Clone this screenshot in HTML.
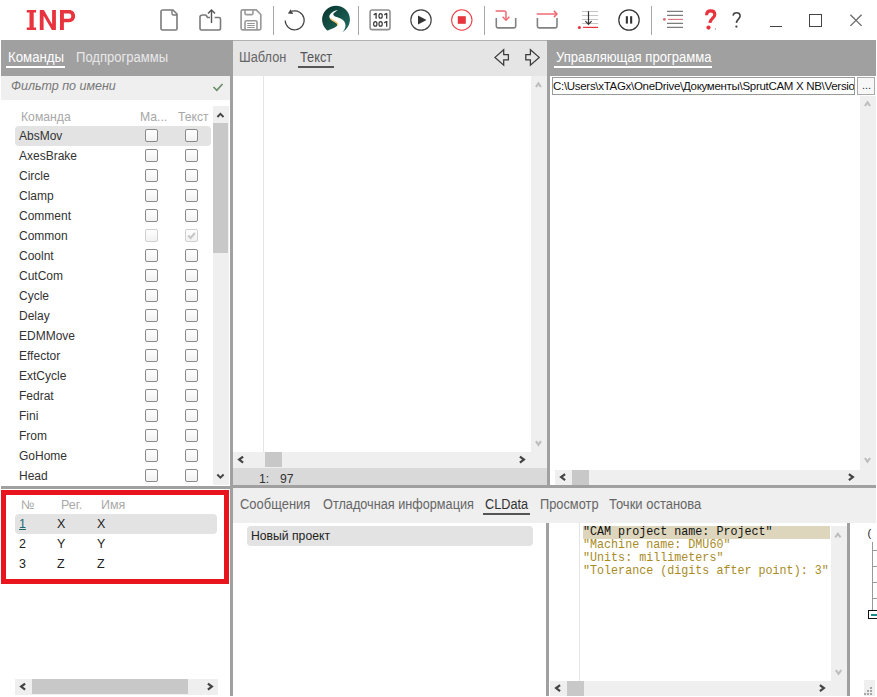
<!DOCTYPE html>
<html><head><meta charset="utf-8">
<style>
*{box-sizing:border-box;margin:0;padding:0}
html,body{width:877px;height:697px;overflow:hidden;background:#fff;font-family:"Liberation Sans",sans-serif;position:relative}
.a{position:absolute}
.t{position:absolute;white-space:nowrap;font-size:13px;line-height:13px}
.tab{font-size:14px;line-height:14px;transform:scaleX(0.913);transform-origin:0 0}
.sep{position:absolute;top:6px;width:1px;height:29px;background:#a8a8a8}
.cb{position:absolute;width:13px;height:13px;border:1px solid #8a8a8a;border-radius:2px;background:linear-gradient(#fff,#f1f1f1)}
.row{position:absolute;left:19px;font-size:12px;color:#333;white-space:nowrap;line-height:13px}
</style></head><body>
<!-- title bar -->
<svg class="a" style="left:0;top:0" width="80" height="40"><path fill="#e8343e" fill-rule="evenodd" d="M26.8,10 H36.1 V12.4 H33.7 V27.6 H36.1 V30 H26.8 V27.6 H29.5 V12.4 H26.8Z M39.8,10 H43.9 L52.1,24.3 V10 H55.9 V30 H51.9 L43.6,15.7 V30 H39.8Z M60,10 H69 C72.8,10 75.1,12.5 75.1,16.1 C75.1,19.7 72.8,22.2 69,22.2 H63.9 V30 H60Z M63.9,13.4 H68.9 C70.6,13.4 71.3,14.6 71.3,16.1 C71.3,17.6 70.6,18.8 68.9,18.8 H63.9Z"/></svg>
<svg class="a" style="left:0;top:0" width="877" height="40" viewBox="0 0 877 40">
 <!-- new doc -->
 <path d="M162,10 H173 L177,14 V28.5 Q177,30 175.5,30 H162.5 Q161,30 161,28.5 V11.5 Q161,10 162.5,10Z" fill="none" stroke="#7a7a7a" stroke-width="1.6"/>
 <path d="M172,10 V13.5 Q172,15 173.5,15 H177" fill="none" stroke="#7a7a7a" stroke-width="1.4"/>
 <!-- share -->
 <path d="M206,15 H203 Q200,15 200,17 V28.5 Q200,30 201.5,30 H219 Q220.5,30 220.5,28.5 V19 Q220.5,17.5 219,17.5 H214.6" fill="none" stroke="#7a7a7a" stroke-width="1.6"/>
 <path d="M206,15 L207.5,17.5 H210" fill="none" stroke="#7a7a7a" stroke-width="1.6"/>
 <path d="M211.5,23 V10.5 M208,13.5 L211.5,10 L215,13.5" fill="none" stroke="#555" stroke-width="1.4"/>
 <!-- save -->
 <path d="M242.6,9.9 H256.2 L260.8,14.5 V28.3 Q260.8,29.8 259.3,29.8 H242.6 Q241.1,29.8 241.1,28.3 V11.4 Q241.1,9.9 242.6,9.9Z" fill="none" stroke="#9a9a9a" stroke-width="1.7"/>
 <path d="M245,10 V13.2 Q245,14.6 246.4,14.6 H251.6 Q253,14.6 253,13.2 V10" fill="none" stroke="#9a9a9a" stroke-width="1.6"/>
 <path d="M245,29.8 V22.3 Q245,20.8 246.5,20.8 H255.5 Q257,20.8 257,22.3 V29.8" fill="none" stroke="#9a9a9a" stroke-width="1.6"/>
 <path d="M247.2,23.5 H254.8 M247.2,25.5 H254.8 M247.2,27.5 H254.8" stroke="#8a8a8a" stroke-width="0.9"/>
 <!-- undo -->
 <path d="M292,11.2 A9.5,9.5 0 1 1 285.2,20.5" fill="none" stroke="#444" stroke-width="1.2"/>
 <path d="M287.9,13.6 L290.7,9.3 L293.2,13.9Z" fill="#444"/>
 <!-- logo -->
 <defs><linearGradient id="lg" x1="0" y1="0" x2="1" y2="1"><stop offset="0" stop-color="#05332b"/><stop offset="1" stop-color="#236e62"/></linearGradient></defs>
 <circle cx="336" cy="19.6" r="13.9" fill="url(#lg)"/>
 <path d="M337.8,9.9 C335,10.3 331.5,12 329.8,14.8 C328.9,16.5 329.3,18.3 331,19.8 C332.8,21.3 335.5,22 337,23.3 C337.8,24.3 337.5,25.6 336.3,26.5 C334,28.2 330,29.6 327.3,30.8 L326,40 L341,40 L341.2,33.3 C343.5,31.2 345.3,29 345.5,25.5 C345.6,22.5 343.5,20 340.5,18.6 C338,17.5 335,16.8 333.8,15.5 C333,14.6 333.2,13.6 334,13 C335,11.8 336.5,10.7 337.8,9.9Z" fill="#fff"/>
 <path d="M330.4,18.4 C332,20.3 334.8,21.4 336.5,22.6 C337.6,23.4 337.9,24.4 337.6,25.4" fill="none" stroke="#f2c86a" stroke-width="1.3"/>
 <!-- 101 -->
 <rect x="370.1" y="9.9" width="19.9" height="19.7" rx="2.2" fill="none" stroke="#8e8e8e" stroke-width="1.55"/>
 <path d="M376.10,13.00 V18.80 M373.70,14.90 L376.10,13.30 M386.70,13.00 V18.80 M384.30,14.90 L386.70,13.30 M386.70,21.00 V26.80 M384.30,22.90 L386.70,21.30" fill="none" stroke="#3a3a3a" stroke-width="1.3"/>
 <ellipse cx="380.60" cy="15.90" rx="1.65" ry="2.25" fill="none" stroke="#3a3a3a" stroke-width="1.2"/>
 <ellipse cx="375.30" cy="23.90" rx="1.65" ry="2.25" fill="none" stroke="#3a3a3a" stroke-width="1.2"/>
 <ellipse cx="380.60" cy="23.90" rx="1.65" ry="2.25" fill="none" stroke="#3a3a3a" stroke-width="1.2"/>
 <!-- play -->
 <circle cx="421" cy="20" r="10.2" fill="none" stroke="#444" stroke-width="1.2"/>
 <path d="M418,15.5 L426.5,20 L418,24.5Z" fill="#333"/>
 <!-- stop -->
 <circle cx="461.8" cy="20" r="10.2" fill="none" stroke="#ec3c46" stroke-width="1.05"/>
 <rect x="457.8" y="16.2" width="8" height="7.6" fill="#e8343c"/>
 <!-- import -->
 <path d="M496.3,18 V26.3 Q496.3,27.9 497.9,27.9 H514.1 Q515.7,27.9 515.7,26.3 V18" fill="none" stroke="#828282" stroke-width="1.6"/>
 <path d="M495.6,11 H504.2 Q506,11 506,12.8 V20" fill="none" stroke="#f06a74" stroke-width="1.5"/>
 <path d="M502.6,16.8 L506,20.2 L509.4,16.8" fill="none" stroke="#f06a74" stroke-width="1.5"/>
 <!-- export -->
 <path d="M537.4,18 V26.3 Q537.4,27.9 539,27.9 H555.4 Q557,27.9 557,26.3 V18" fill="none" stroke="#828282" stroke-width="1.6"/>
 <path d="M536.7,14 H556.8" fill="none" stroke="#f06a74" stroke-width="1.5"/>
 <path d="M553.9,10.9 L557,14 L553.9,17.1" fill="none" stroke="#f06a74" stroke-width="1.5"/>
 <!-- list arrow -->
 <path d="M582,11.5 H598 M582,15.5 H598 M582,19.5 H598 M582,23.5 H598" stroke="#bdbdbd" stroke-width="0.9"/>
 <path d="M583,27.4 H598" stroke="#e8343c" stroke-width="1.2"/>
 <circle cx="579.4" cy="27.4" r="1.5" fill="#e8343c"/>
 <path d="M588.5,11.2 V24.2 M585.4,21.2 L588.5,24.3 L591.6,21.2" fill="none" stroke="#333" stroke-width="1.2"/>
 <!-- pause -->
 <circle cx="629" cy="20" r="10.2" fill="none" stroke="#333" stroke-width="1.2"/>
 <rect x="625.8" y="16.2" width="2.1" height="7.4" fill="#333"/>
 <rect x="630.1" y="16.2" width="2.1" height="7.4" fill="#333"/>
 <!-- list -->
 <path d="M667,11.4 H683 M667,15.4 H683 M667,23.4 H683 M667,27.4 H683" stroke="#7c7c7c" stroke-width="1.1"/>
 <path d="M668,19.4 H683" stroke="#d8707a" stroke-width="1.1"/>
 <circle cx="664.4" cy="19.4" r="1.45" fill="#d8707a"/>
 <!-- min max close -->
 <path d="M770,26.5 H782" stroke="#444" stroke-width="1"/>
 <rect x="809.5" y="14.5" width="12" height="12" fill="none" stroke="#444" stroke-width="1"/>
 <path d="M850.4,14.7 L861.6,25.9 M861.6,14.7 L850.4,25.9" stroke="#6a6a6a" stroke-width="1.3"/>
</svg>
<div class="sep" style="left:273px"></div>
<div class="sep" style="left:358px"></div>
<div class="sep" style="left:484px"></div>
<div class="sep" style="left:651px"></div>
<svg class="a" style="left:0;top:0" width="877" height="40" viewBox="0 0 877 40">
 <path d="M706.6,15.2 C706.6,12.2 708.6,10.9 710.7,10.9 C713.2,10.9 714.8,12.4 714.8,14.7 C714.8,17.8 710.2,18.6 709.9,22.9" fill="none" stroke="#e8323c" stroke-width="3.1"/>
 <circle cx="708.5" cy="27.6" r="2.1" fill="#e8323c"/>
 <rect x="715" y="28.3" width="1" height="1.4" fill="#999"/>
 <path d="M733.1,15.6 C733.4,13.6 734.8,12.8 736.5,12.8 C738.6,12.8 740.1,14.1 740.1,16.1 C740.1,18.7 736.6,19.6 736.4,22.9" fill="none" stroke="#444" stroke-width="1.6"/>
 <circle cx="736.4" cy="26.6" r="1.15" fill="#444"/>
</svg>
<!-- ===== LEFT TOP PANEL ===== -->
<div class="a" style="left:1px;top:40px;width:229px;height:36px;background:#a0a0a0"></div>
<div class="t tab" style="left:7.5px;top:50px;color:#fff;transform:scaleX(0.945)">Команды</div>
<div class="a" style="left:6px;top:66px;width:59px;height:2px;background:#fff"></div>
<div class="t tab" style="left:75.5px;top:50px;color:#e8e8e8;transform:scaleX(0.932)">Подпрограммы</div>
<div class="a" style="left:1px;top:76px;width:229px;height:24px;background:#efefef"></div>
<div class="t" style="left:11px;top:80px;color:#777;font-style:italic;font-size:12.5px">Фильтр по имени</div>
<svg class="a" style="left:210px;top:80px" width="14" height="14"><path d="M3.5,7 L6.8,10.3 L12.5,4" fill="none" stroke="#6a8a6a" stroke-width="1.6"/></svg>
<div class="t" style="left:21px;top:111px;color:#a8a8a8;font-size:12.2px">Команда</div>
<div class="t" style="left:140px;top:111px;color:#a8a8a8;font-size:12.2px">Ма...</div>
<div class="t" style="left:178px;top:111px;color:#a8a8a8;font-size:12.2px">Текст</div>
<!-- scrollbar -->
<div class="a" style="left:213px;top:106px;width:16px;height:379px;background:#efefef"></div>
<div class="a" style="left:213px;top:123px;width:15px;height:130px;background:#c8c8c8"></div>
<svg class="a" style="left:213px;top:106px" width="16" height="17"><path d="M4.4,11 L7.45,7.9 L10.5,11" fill="none" stroke="#444" stroke-width="1.9"/></svg>
<svg class="a" style="left:213px;top:468px" width="16" height="17"><path d="M4.3,6.5 L7.45,9.7 L10.6,6.5" fill="none" stroke="#444" stroke-width="1.9"/></svg>
<div class="a" style="left:15px;top:126px;width:196px;height:20px;background:#e3e3e3;border-radius:4px"></div>
<div class="row" style="top:130px">AbsMov</div>
<div class="cb" style="left:145px;top:129px"></div>
<div class="cb" style="left:185px;top:129px"></div>
<div class="row" style="top:150px">AxesBrake</div>
<div class="cb" style="left:145px;top:149px"></div>
<div class="cb" style="left:185px;top:149px"></div>
<div class="row" style="top:170px">Circle</div>
<div class="cb" style="left:145px;top:169px"></div>
<div class="cb" style="left:185px;top:169px"></div>
<div class="row" style="top:190px">Clamp</div>
<div class="cb" style="left:145px;top:189px"></div>
<div class="cb" style="left:185px;top:189px"></div>
<div class="row" style="top:210px">Comment</div>
<div class="cb" style="left:145px;top:209px"></div>
<div class="cb" style="left:185px;top:209px"></div>
<div class="row" style="top:230px">Common</div>
<div class="cb" style="left:145px;top:229px;border-color:#d0d0d0"></div>
<div class="cb" style="left:185px;top:229px;border-color:#d0d0d0"><svg width="11" height="11" style="position:absolute;left:0;top:0"><path d="M2.2,5.5 L4.6,8 L9,3" fill="none" stroke="#c6c6c6" stroke-width="2.1"/></svg></div>
<div class="row" style="top:250px">Coolnt</div>
<div class="cb" style="left:145px;top:249px"></div>
<div class="cb" style="left:185px;top:249px"></div>
<div class="row" style="top:270px">CutCom</div>
<div class="cb" style="left:145px;top:269px"></div>
<div class="cb" style="left:185px;top:269px"></div>
<div class="row" style="top:290px">Cycle</div>
<div class="cb" style="left:145px;top:289px"></div>
<div class="cb" style="left:185px;top:289px"></div>
<div class="row" style="top:310px">Delay</div>
<div class="cb" style="left:145px;top:309px"></div>
<div class="cb" style="left:185px;top:309px"></div>
<div class="row" style="top:330px">EDMMove</div>
<div class="cb" style="left:145px;top:329px"></div>
<div class="cb" style="left:185px;top:329px"></div>
<div class="row" style="top:350px">Effector</div>
<div class="cb" style="left:145px;top:349px"></div>
<div class="cb" style="left:185px;top:349px"></div>
<div class="row" style="top:370px">ExtCycle</div>
<div class="cb" style="left:145px;top:369px"></div>
<div class="cb" style="left:185px;top:369px"></div>
<div class="row" style="top:390px">Fedrat</div>
<div class="cb" style="left:145px;top:389px"></div>
<div class="cb" style="left:185px;top:389px"></div>
<div class="row" style="top:410px">Fini</div>
<div class="cb" style="left:145px;top:409px"></div>
<div class="cb" style="left:185px;top:409px"></div>
<div class="row" style="top:430px">From</div>
<div class="cb" style="left:145px;top:429px"></div>
<div class="cb" style="left:185px;top:429px"></div>
<div class="row" style="top:450px">GoHome</div>
<div class="cb" style="left:145px;top:449px"></div>
<div class="cb" style="left:185px;top:449px"></div>
<div class="row" style="top:470px">Head</div>
<div class="cb" style="left:145px;top:469px"></div>
<div class="cb" style="left:185px;top:469px"></div>
<!-- divider left -->
<div class="a" style="left:230px;top:40px;width:3px;height:656px;background:#a0a0a0"></div>
<div class="a" style="left:1px;top:486px;width:229px;height:3px;background:#a0a0a0"></div>

<!-- ===== LEFT BOTTOM ===== -->
<div class="a" style="left:1px;top:490px;width:228px;height:94px;border:5px solid #e8141e"></div>
<div class="t" style="left:21px;top:499px;color:#a8a8a8;font-size:12.5px">№</div>
<div class="t" style="left:61px;top:499px;color:#a8a8a8;font-size:12.5px">Рег.</div>
<div class="t" style="left:101px;top:499px;color:#a8a8a8;font-size:12.5px">Имя</div>
<div class="a" style="left:15px;top:514px;width:202px;height:20px;background:#e3e3e3;border-radius:4px"></div>
<div class="t" style="left:19px;top:518px;color:#1a6a70;font-size:12.5px;text-decoration:underline">1</div>
<div class="t" style="left:57px;top:518px;color:#222;font-size:12.5px">X</div>
<div class="t" style="left:97px;top:518px;color:#222;font-size:12.5px">X</div>
<div class="t" style="left:19px;top:538px;color:#222;font-size:12.5px">2</div>
<div class="t" style="left:57px;top:538px;color:#222;font-size:12.5px">Y</div>
<div class="t" style="left:97px;top:538px;color:#222;font-size:12.5px">Y</div>
<div class="t" style="left:19px;top:558px;color:#222;font-size:12.5px">3</div>
<div class="t" style="left:57px;top:558px;color:#222;font-size:12.5px">Z</div>
<div class="t" style="left:97px;top:558px;color:#222;font-size:12.5px">Z</div>
<div class="a" style="left:15px;top:679px;width:203px;height:16px;background:#efefef"></div>
<div class="a" style="left:32px;top:679px;width:156px;height:15px;background:#c8c8c8"></div>
<svg class="a" style="left:15px;top:679px" width="16" height="16"><path d="M10.1,4.6 L6.1,7.6 L10.1,10.6" fill="none" stroke="#444" stroke-width="2.2"/></svg>
<svg class="a" style="left:202px;top:679px" width="16" height="16"><path d="M5.9,4.6 L9.9,7.6 L5.9,10.6" fill="none" stroke="#444" stroke-width="2.2"/></svg>

<!-- ===== MIDDLE TOP ===== -->
<div class="a" style="left:233px;top:40px;width:314px;height:36px;background:#e5e5e5;border-top:1px solid #b0b0b0"></div>
<div class="t tab" style="left:239px;top:50px;color:#666;transform:scaleX(0.913)">Шаблон</div>
<div class="t tab" style="left:300px;top:50px;color:#555;transform:scaleX(0.913)">Текст</div>
<div class="a" style="left:298px;top:66px;width:36px;height:2px;background:#555"></div>
<svg class="a" style="left:490px;top:46px" width="54" height="24">
 <path d="M5,11.4 L13.7,3.7 V8.7 H18.4 V13.9 H13.7 V19.1Z" fill="none" stroke="#3a3a3a" stroke-width="1.25" stroke-linejoin="miter"/>
 <path d="M49.2,11.4 L40.4,3.7 V8.7 H35.8 V13.9 H40.4 V19.1Z" fill="none" stroke="#3a3a3a" stroke-width="1.25" stroke-linejoin="miter"/>
</svg>
<div class="a" style="left:263px;top:76px;width:1px;height:376px;background:#e4e4e4"></div>
<div class="a" style="left:531px;top:76px;width:16px;height:392px;background:#efefef"></div>
<svg class="a" style="left:531px;top:76px" width="16" height="18"><path d="M5,11 L7.45,7.4 L9.9,11" fill="none" stroke="#bdbdbd" stroke-width="2.1"/></svg>
<svg class="a" style="left:531px;top:435px" width="16" height="16"><path d="M5,6.2 L7.45,9.8 L9.9,6.2" fill="none" stroke="#bdbdbd" stroke-width="2.1"/></svg>
<div class="a" style="left:233px;top:452px;width:314px;height:16px;background:#efefef"></div>
<div class="a" style="left:265px;top:452px;width:17px;height:15px;background:#c8c8c8"></div>
<svg class="a" style="left:233px;top:452px" width="16" height="16"><path d="M10.1,4.6 L6.1,7.6 L10.1,10.6" fill="none" stroke="#444" stroke-width="2.2"/></svg>
<svg class="a" style="left:514px;top:452px" width="16" height="16"><path d="M5.9,4.6 L9.9,7.6 L5.9,10.6" fill="none" stroke="#444" stroke-width="2.2"/></svg>
<div class="a" style="left:233px;top:468px;width:314px;height:17px;background:#d9d9d9"></div>
<div class="t" style="left:259px;top:473px;color:#333;font-size:12.2px">1:</div>
<div class="t" style="left:280px;top:473px;color:#333;font-size:12.2px">97</div>
<div class="a" style="left:547px;top:40px;width:3px;height:446px;background:#a0a0a0"></div>
<div class="a" style="left:233px;top:485px;width:643px;height:3px;background:#a0a0a0"></div>

<!-- ===== RIGHT TOP ===== -->
<div class="a" style="left:550px;top:40px;width:326px;height:36px;background:#a0a0a0"></div>
<div class="t tab" style="left:556px;top:50px;color:#fff;transform:scaleX(0.935)">Управляющая программа</div>
<div class="a" style="left:554px;top:66px;width:158px;height:2px;background:#fff"></div>
<div class="a" style="left:552px;top:77px;width:303px;height:18px;border:1px solid #9a9a9a;background:#fff;overflow:hidden">
 <div class="t" style="left:0px;top:1.5px;font-size:11.5px;line-height:12px;color:#111;letter-spacing:-0.3px">C:\Users\xTAGx\OneDrive\Документы\SprutCAM X NB\Version</div>
</div>
<div class="a" style="left:857px;top:77px;width:18px;height:18px;border:1px solid #aaa;background:#f7f7f7"></div>
<div class="t" style="left:862px;top:80px;font-size:11px;line-height:11px;color:#333">...</div>
<div class="a" style="left:860px;top:96px;width:16px;height:374px;background:#efefef"></div>
<svg class="a" style="left:860px;top:96px" width="16" height="16"><path d="M4.9,10 L7.5,6.4 L10.1,10" fill="none" stroke="#bdbdbd" stroke-width="2.1"/></svg>
<svg class="a" style="left:860px;top:453px" width="16" height="16"><path d="M4.9,5 L7.5,8.6 L10.1,5" fill="none" stroke="#bdbdbd" stroke-width="2.1"/></svg>
<div class="a" style="left:555px;top:470px;width:321px;height:15px;background:#efefef"></div>
<div class="a" style="left:572px;top:470px;width:17px;height:15px;background:#c8c8c8"></div>
<svg class="a" style="left:555px;top:470px" width="16" height="15"><path d="M10.1,4.1 L6.1,7.1 L10.1,10.1" fill="none" stroke="#444" stroke-width="2.2"/></svg>
<svg class="a" style="left:843px;top:470px" width="16" height="15"><path d="M5.9,4.1 L9.9,7.1 L5.9,10.1" fill="none" stroke="#444" stroke-width="2.2"/></svg>

<!-- ===== BOTTOM TABS ===== -->
<div class="a" style="left:233px;top:488px;width:643px;height:35px;background:#efefef"></div>
<div class="t tab" style="left:240px;top:497px;color:#666;transform:scaleX(0.925)">Сообщения</div>
<div class="t tab" style="left:323px;top:497px;color:#666;transform:scaleX(0.907)">Отладочная информация</div>
<div class="t tab" style="left:485px;top:497px;color:#333;transform:scaleX(0.907)">CLData</div>
<div class="a" style="left:483px;top:513px;width:47px;height:2px;background:#555"></div>
<div class="t tab" style="left:540px;top:497px;color:#666;transform:scaleX(0.915)">Просмотр</div>
<div class="t tab" style="left:609px;top:497px;color:#666;transform:scaleX(0.928)">Точки останова</div>
<div class="a" style="left:247px;top:526px;width:286px;height:20px;background:#e3e3e3;border-radius:4px"></div>
<div class="t" style="left:251px;top:530px;color:#222;font-size:12.2px">Новый проект</div>

<!-- ===== BOTTOM RIGHT CODE ===== -->
<div class="a" style="left:546px;top:523px;width:3px;height:173px;background:#a0a0a0"></div>
<div class="a" style="left:579px;top:523px;width:1px;height:158px;background:#e4e4e4"></div>
<div class="a" style="left:583px;top:526px;width:247px;height:13px;background:#ddd6bd"></div>
<div class="a" style="left:583px;top:525.8px;font-family:'Liberation Mono',monospace;font-size:12.6px;line-height:13px;white-space:pre;transform:scaleX(0.929);transform-origin:0 0"><div style="color:#111">"CAM project name: Project"</div><div style="color:#a98b1f">"Machine name: DMU60"</div><div style="color:#a98b1f">"Units: millimeters"</div><div style="color:#a98b1f">"Tolerance (digits after point): 3"</div></div>
<div class="a" style="left:831px;top:526px;width:16px;height:170px;background:#efefef"></div>
<svg class="a" style="left:831px;top:527px" width="16" height="16"><path d="M4.3,10.3 L6.9,6.7 L9.5,10.3" fill="none" stroke="#bdbdbd" stroke-width="2.1"/></svg>
<svg class="a" style="left:831px;top:663px" width="16" height="16"><path d="M4.8,7.1 L7.5,10.8 L10.2,7.1" fill="none" stroke="#bdbdbd" stroke-width="2.1"/></svg>
<div class="a" style="left:550px;top:681px;width:297px;height:15px;background:#efefef"></div>
<div class="a" style="left:567px;top:681px;width:17px;height:15px;background:#c8c8c8"></div>
<svg class="a" style="left:550px;top:681px" width="16" height="15"><path d="M10.1,4.1 L6.1,7.1 L10.1,10.1" fill="none" stroke="#444" stroke-width="2.2"/></svg>
<svg class="a" style="left:814px;top:681px" width="16" height="15"><path d="M5.9,4.1 L9.9,7.1 L5.9,10.1" fill="none" stroke="#444" stroke-width="2.2"/></svg>
<div class="a" style="left:847px;top:523px;width:3px;height:173px;background:#a0a0a0"></div>
<!-- far right -->
<div class="t" style="left:867.5px;top:527.5px;font-size:11px;line-height:11px;color:#222">(</div>
<div class="a" style="left:872px;top:542px;width:1px;height:68px;background:#999"></div>
<div class="a" style="left:872px;top:550px;width:5px;height:1px;background:#999"></div>
<div class="a" style="left:872px;top:566px;width:5px;height:1px;background:#999"></div>
<div class="a" style="left:872px;top:582px;width:5px;height:1px;background:#999"></div>
<div class="a" style="left:872px;top:598px;width:5px;height:1px;background:#999"></div>
<div class="a" style="left:868px;top:610px;width:10px;height:9px;border:1.5px solid #111"></div>
<div class="a" style="left:871px;top:614px;width:6px;height:1.5px;background:#1a8a8a"></div>
<div class="a" style="left:864px;top:680px;width:11px;height:16px;background:#efefef"></div>
<div class="a" style="left:870px;top:687px;width:2px;height:2px;background:#a6a6a6"></div><div class="a" style="left:867px;top:690px;width:2px;height:2px;background:#a6a6a6"></div><div class="a" style="left:870px;top:690px;width:2px;height:2px;background:#a6a6a6"></div><div class="a" style="left:864px;top:693px;width:2px;height:2px;background:#a6a6a6"></div><div class="a" style="left:867px;top:693px;width:2px;height:2px;background:#a6a6a6"></div><div class="a" style="left:870px;top:693px;width:2px;height:2px;background:#a6a6a6"></div>
</body></html>
